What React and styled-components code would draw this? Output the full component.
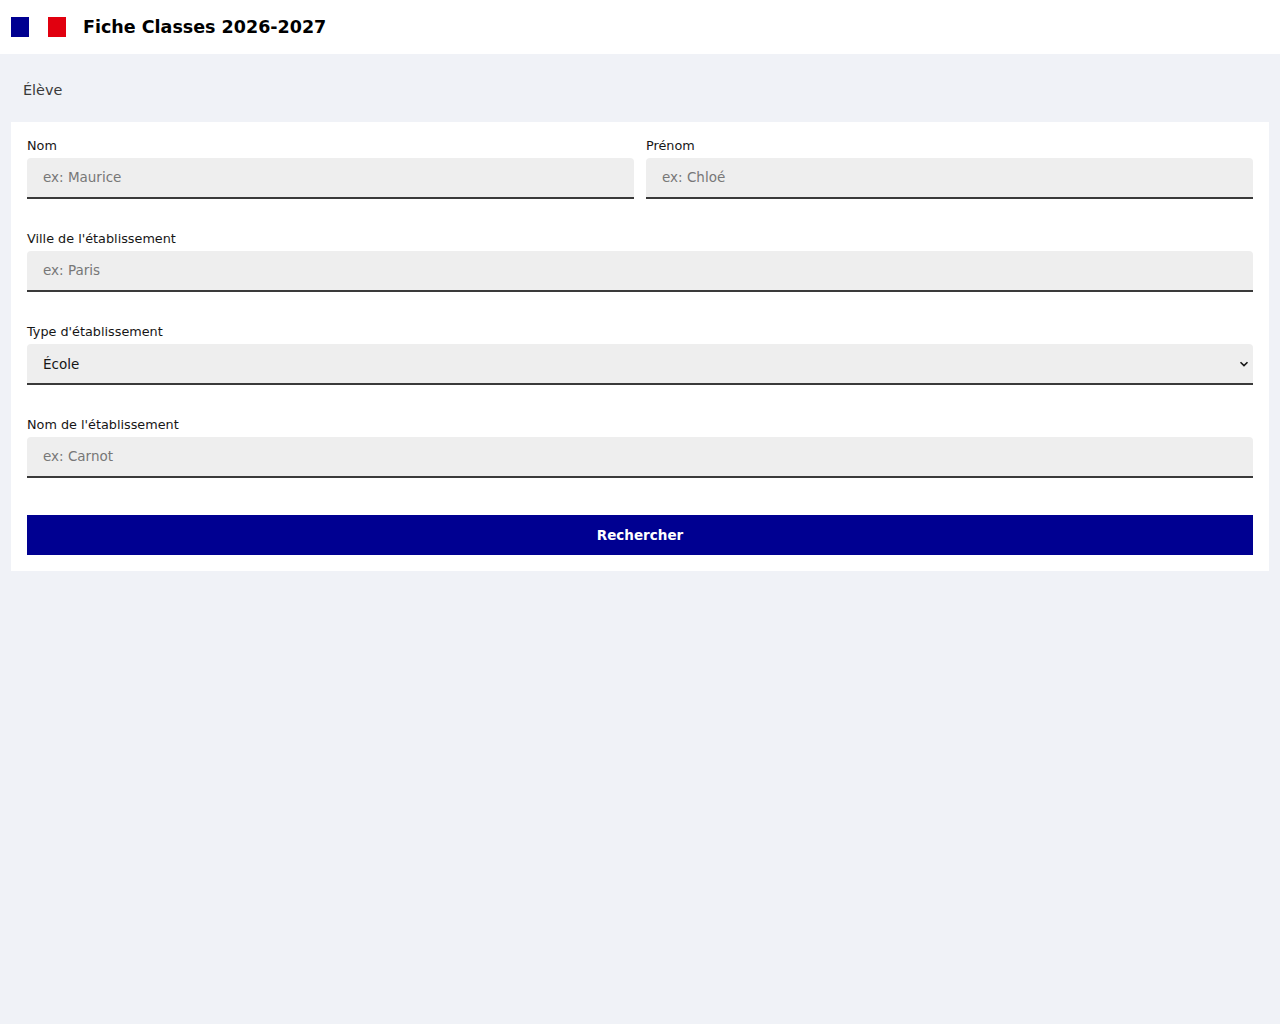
import React from "react";
import styled, { createGlobalStyle } from "styled-components";

const GlobalStyle = createGlobalStyle`
  html, body {
    margin: 0;
    padding: 0;
    background: #f0f2f7;
    font-family: "DejaVu Sans", "Liberation Sans", sans-serif;
    color: #161616;
  }
  * { box-sizing: border-box; }
`;

const Header = styled.header`
  height: 54px;
  background: #ffffff;
  display: flex;
  align-items: center;
  padding: 0 11px;
  gap: 17px;
`;

const Flag = styled.div`
  display: flex;
  gap: 19px;
`;

const Stripe = styled.span`
  display: block;
  width: 18px;
  height: 20px;
  background: ${(p) => p.color};
`;

const Title = styled.h1`
  margin: 0;
  font-size: 17.5px;
  font-weight: 700;
  color: #000;
`;

const Main = styled.main`
  padding: 0 11px;
`;

const SectionTitle = styled.h2`
  margin: 0;
  padding: 25px 12px 21px;
  font-size: 14.4px;
  line-height: 22px;
  font-weight: 400;
  color: #3a3a3a;
`;

const Card = styled.form`
  background: #ffffff;
  padding: 16px;
  display: flex;
  flex-direction: column;
  gap: 32px;
`;

const Row = styled.div`
  display: grid;
  grid-template-columns: 1fr 1fr;
  gap: 12px;
`;

const Field = styled.label`
  display: flex;
  flex-direction: column;
  gap: 4px;
`;

const Label = styled.span`
  font-size: 12.8px;
  line-height: 16px;
  color: #161616;
`;

const Input = styled.input`
  height: 41px;
  border: none;
  border-bottom: 2px solid #3a3a3a;
  border-radius: 4px 4px 0 0;
  background: #eeeeee;
  padding: 0 16px 1px;
  font-family: inherit;
  font-size: 13.5px;
  color: #161616;
  outline: none;
  &::placeholder {
    color: #777777;
  }
`;

const SelectWrap = styled.div`
  position: relative;
`;

const Select = styled.select`
  width: 100%;
  height: 41px;
  border: none;
  border-bottom: 2px solid #3a3a3a;
  border-radius: 4px 4px 0 0;
  background: #eeeeee;
  padding: 0 16px;
  font-family: inherit;
  font-size: 13.5px;
  color: #161616;
  appearance: none;
  outline: none;
`;

const Chevron = styled.svg`
  position: absolute;
  right: 4px;
  top: 16px;
  pointer-events: none;
`;

const Button = styled.button`
  height: 40px;
  margin-top: 5px;
  border: none;
  background: #000091;
  color: #ffffff;
  font-family: inherit;
  font-size: 13.5px;
  font-weight: 700;
  cursor: pointer;
`;

const TextField = ({ label, placeholder }) => (
  <Field>
    <Label>{label}</Label>
    <Input type="text" placeholder={placeholder} />
  </Field>
);

export default function App() {
  return (
    <>
      <GlobalStyle />
      <Header>
        <Flag>
          <Stripe color="#000091" />
          <Stripe color="#e1000f" />
        </Flag>
        <Title>Fiche Classes 2026-2027</Title>
      </Header>
      <Main>
        <SectionTitle>Élève</SectionTitle>
        <Card onSubmit={(e) => e.preventDefault()}>
          <Row>
            <TextField label="Nom" placeholder="ex: Maurice" />
            <TextField label="Prénom" placeholder="ex: Chloé" />
          </Row>
          <TextField label="Ville de l'établissement" placeholder="ex: Paris" />
          <Field>
            <Label>Type d'établissement</Label>
            <SelectWrap>
              <Select defaultValue="ecole">
                <option value="ecole">École</option>
                <option value="college">Collège</option>
                <option value="lycee">Lycée</option>
              </Select>
              <Chevron width="10" height="8" viewBox="0 0 10 8">
                <path d="M1.5 2.2 L5 5.6 L8.5 2.2" fill="none" stroke="#161616" strokeWidth="1.6" />
              </Chevron>
            </SelectWrap>
          </Field>
          <TextField label="Nom de l'établissement" placeholder="ex: Carnot" />
          <Button type="submit">Rechercher</Button>
        </Card>
      </Main>
    </>
  );
}
